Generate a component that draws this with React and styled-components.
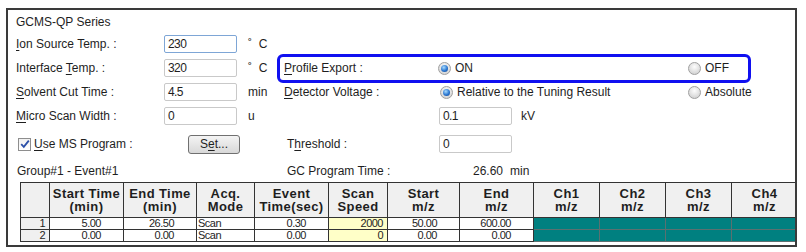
import React from 'react';
import styled, { createGlobalStyle, css } from 'styled-components';

const GlobalStyle = createGlobalStyle`
  html, body {
    margin: 0;
    padding: 0;
    background: #fff;
  }
  body {
    font-family: "Liberation Sans", Arial, sans-serif;
    font-size: 12px;
    color: #1e1e1e;
  }
`;

const Frame = styled.div`
  box-sizing: border-box;
  width: 791px;
  height: 239px;
  margin: 8px 0 0 6px;
  border: 2px solid #3a3a3a;
  overflow: hidden;
`;

const Title = styled.div`
  height: 20px;
  line-height: 20px;
  padding: 2px 0 0 8px;
`;

const Form = styled.div`
  display: grid;
  grid-template-columns: 156px 73px 40px 161px 250px 1fr;
  grid-template-rows: 24px 24px 24px 24px 32px 22px;
  align-items: center;
`;

const Label = styled.div`
  grid-column: ${p => p.$col || 1};
  padding-left: ${p => p.$pad ?? 8}px;
  white-space: nowrap;
`;

const Key = styled.span`
  text-decoration: underline;
  text-underline-offset: 2px;
`;

const Field = styled.div`
  box-sizing: border-box;
  width: 73px;
  height: 18px;
  border: 1px solid ${p => (p.$focus ? '#7ea6d6' : '#c9c9c9')};
  border-radius: 2px;
  padding-left: 3px;
  line-height: 16px;
  font-size: 12px;
  letter-spacing: -0.6px;
  background: #fff;
`;

const Unit = styled.div`
  padding-left: 11px;
  white-space: nowrap;
`;

const OptionRow = styled.div`
  grid-column: 4 / 7;
  display: grid;
  grid-template-columns: 161px 250px 1fr;
  align-items: center;
  align-self: stretch;
  position: relative;
  ${p => p.$highlight && css`
    &::before {
      content: '';
      position: absolute;
      top: -2px;
      bottom: -3px;
      left: 0;
      right: 44px;
      border: 3px solid #1010f0;
      border-radius: 6px;
    }
  `}
`;

const Option = styled.label`
  display: flex;
  align-items: center;
  gap: 4px;
  padding-left: ${p => p.$pad || 0}px;
  white-space: nowrap;
`;

const Radio = styled.span`
  box-sizing: border-box;
  width: 13px;
  height: 13px;
  border-radius: 50%;
  border: 1px solid #a0a0a0;
  background: radial-gradient(circle at 50% 35%, #fdfdfd, #d6d6d6 75%);
  position: relative;
  ${p => p.$on && css`
    &::after {
      content: '';
      position: absolute;
      inset: 2px;
      border-radius: 50%;
      background: radial-gradient(circle at 40% 35%, #a8dcff, #2a76d0 55%, #103f86);
    }
  `}
`;

const Inline = styled.div`
  grid-column: ${p => p.$col};
  display: flex;
  align-items: center;
  gap: ${p => p.$gap || 9}px;
  padding-left: ${p => p.$pad || 0}px;
  white-space: nowrap;
`;

const Check = styled.span`
  box-sizing: border-box;
  width: 13px;
  height: 13px;
  border: 1px solid #8e8e8e;
  background: linear-gradient(#f0f0f0, #fff);
  display: inline-flex;
  align-items: center;
  justify-content: center;
`;

const CheckLabel = styled.label`
  grid-column: 1;
  display: flex;
  align-items: center;
  gap: 3px;
  padding-left: 10px;
  white-space: nowrap;
`;

const Button = styled.button`
  grid-column: 2 / 4;
  justify-self: start;
  margin-left: 24px;
  width: 52px;
  height: 19px;
  padding: 0;
  border: 1px solid #707070;
  border-radius: 3px;
  background: linear-gradient(#f4f4f4, #e6e6e6 50%, #d8d8d8);
  font-family: inherit;
  font-size: 12px;
  color: #1e1e1e;
`;

const Table = styled.div`
  display: grid;
  grid-template-columns: 29px 74px 73px 58px 74px 59px 72px 74px 66px 66px 66px 66px;
  grid-template-rows: 35px 12px 12px;
  margin-left: 12px;
  width: 777px;
  border-top: 1px solid #333;
  border-left: 1px solid #333;
`;

const Head = styled.div`
  box-sizing: border-box;
  background: #f0f0f0;
  border-right: 1px solid #333;
  border-bottom: 1px solid #333;
  display: flex;
  align-items: center;
  justify-content: center;
  text-align: center;
  font-weight: bold;
  font-size: 13px;
  letter-spacing: 0.4px;
  line-height: 13px;
  white-space: pre;
`;

const Cell = styled.div`
  box-sizing: border-box;
  border-right: 1px solid ${p => (p.$kind === 'teal' ? '#5a7070' : '#333')};
  border-bottom: 1px solid ${p => (p.$kind === 'teal' ? '#5a7070' : '#333')};
  background: ${p =>
    p.$kind === 'teal' ? '#008080' :
    p.$kind === 'yellow' ? '#ffffc8' :
    p.$kind === 'num' ? '#f0f0f0' : '#fff'};
  text-align: ${p => (p.$align || 'right')};
  padding: ${p => p.$pad || '0 22px 0 2px'};
  font-size: 11px;
  letter-spacing: -0.5px;
  line-height: 11px;
  overflow: hidden;
  white-space: nowrap;
`;

const headers = [
  '', 'Start Time\n(min)', 'End Time\n(min)', 'Acq.\nMode', 'Event\nTime(sec)',
  'Scan\nSpeed', 'Start\nm/z', 'End\nm/z', 'Ch1\nm/z', 'Ch2\nm/z', 'Ch3\nm/z', 'Ch4\nm/z',
];

const rows = [
  { n: 1, start: '5.00', end: '26.50', mode: 'Scan', event: '0.30', speed: '2000', smz: '50.00', emz: '600.00' },
  { n: 2, start: '0.00', end: '0.00', mode: 'Scan', event: '0.00', speed: '0', smz: '0.00', emz: '0.00' },
];

function EventTable() {
  return (
    <Table>
      {headers.map((h, i) => <Head key={i}>{h}</Head>)}
      {rows.map(r => (
        <React.Fragment key={r.n}>
          <Cell $kind="num" $pad="0 4px 0 0">{r.n}</Cell>
          <Cell>{r.start}</Cell>
          <Cell>{r.end}</Cell>
          <Cell $align="left" $pad="0 0 0 1px">{r.mode}</Cell>
          <Cell>{r.event}</Cell>
          <Cell $kind="yellow" $pad="0 4px 0 0">{r.speed}</Cell>
          <Cell>{r.smz}</Cell>
          <Cell>{r.emz}</Cell>
          <Cell $kind="teal" />
          <Cell $kind="teal" />
          <Cell $kind="teal" />
          <Cell $kind="teal" />
        </React.Fragment>
      ))}
    </Table>
  );
}

export default function App() {
  return (
    <>
      <GlobalStyle />
      <Frame>
        <Title>GCMS-QP Series</Title>
        <Form>
          <Label><Key>I</Key>on Source Temp. :</Label>
          <Field $focus>230</Field>
          <Unit>˚&nbsp;&nbsp;C</Unit>
          <div style={{ gridColumn: '4 / 7' }} />

          <Label>Interface <Key>T</Key>emp. :</Label>
          <Field>320</Field>
          <Unit>˚&nbsp;&nbsp;C</Unit>
          <OptionRow $highlight>
            <Label $col={1} $pad={7}><Key>P</Key>rofile Export :</Label>
            <Option><Radio $on />ON</Option>
            <Option><Radio />OFF</Option>
          </OptionRow>

          <Label><Key>S</Key>olvent Cut Time :</Label>
          <Field>4.5</Field>
          <Unit>min</Unit>
          <OptionRow>
            <Label $col={1} $pad={7}><Key>D</Key>etector Voltage :</Label>
            <Option $pad={2}><Radio $on />Relative to the Tuning Result</Option>
            <Option><Radio />Absolute</Option>
          </OptionRow>

          <Label><Key>M</Key>icro Scan Width :</Label>
          <Field>0</Field>
          <Unit>u</Unit>
          <div />
          <Inline $col={5} $pad={1}><Field>0.1</Field>kV</Inline>

          <CheckLabel>
            <Check>
              <svg width="10" height="10" viewBox="0 0 10 10">
                <path d="M1.2 5.2 L3.8 7.8 L8.8 1.6" fill="none" stroke="#2b4fa8" strokeWidth="1.8" />
              </svg>
            </Check>
            <span><Key>U</Key>se MS Program :</span>
          </CheckLabel>
          <Button>S<Key>e</Key>t...</Button>
          <Label $col={4} $pad={10}>T<Key>h</Key>reshold :</Label>
          <Inline $col={5} $pad={1}><Field>0</Field></Inline>

          <Label $pad={9} style={{ gridColumn: '1 / 4' }}>Group#1 - Event#1</Label>
          <Label $col={4} $pad={10}>GC Program Time :</Label>
          <Inline $col={5} $pad={35} $gap={7}><span>26.60</span><span>min</span></Inline>
        </Form>
        <EventTable />
      </Frame>
    </>
  );
}
